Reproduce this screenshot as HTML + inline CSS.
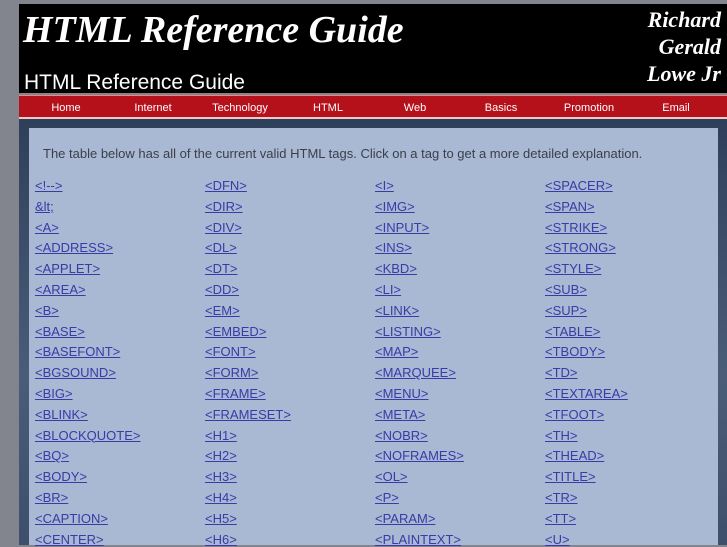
<!DOCTYPE html>
<html><head><meta charset="utf-8"><style>
body{margin:0;width:727px;height:545px;overflow:hidden;background:#82858d;font-family:"Liberation Sans",sans-serif;position:relative}
#hdr{position:absolute;left:19px;top:4px;width:708px;height:89px;background:#000}
.script{position:absolute;color:#fff;font-family:"Liberation Serif",serif;font-style:italic;font-weight:bold}
#nav{position:absolute;left:19px;top:95px;width:708px;height:24px;background:#b5111b;border-top:1px solid #e88;border-bottom:2px solid #f2c8c8;box-sizing:border-box}
#nav span{position:absolute;top:6px;color:#fff;font-size:11px;transform:translateX(-50%)}
#main{position:absolute;left:19px;top:119px;width:708px;height:426px;background:linear-gradient(#2e3f5a,#4a5d78 60%,#3d4f6b)}
#panel{position:absolute;left:29px;top:128px;width:689px;height:417px;background:#a9b8d3}
p{position:absolute;left:43px;top:146px;margin:0;font-size:13px;color:#3a3f4a}
a{position:absolute;font-size:13px;color:#3a3aa8;text-decoration:underline}
</style></head><body>
<div id="hdr">
<div class="script" style="left:4px;top:4px;font-size:38px">HTML Reference Guide</div>
<div style="position:absolute;left:5px;top:67px;color:#fff;font-size:21px">HTML Reference Guide</div>
<div class="script" style="right:6px;top:2px;font-size:22px;text-align:right;line-height:27px">Richard<br>Gerald<br>Lowe Jr</div>
</div>
<div id="nav">
<span style="left:47px">Home</span><span style="left:134px">Internet</span><span style="left:221px">Technology</span><span style="left:309px">HTML</span><span style="left:396px">Web</span><span style="left:482px">Basics</span><span style="left:570px">Promotion</span><span style="left:657px">Email</span>
</div>
<div id="main"></div>
<div id="panel"></div>
<p>The table below has all of the current valid HTML tags. Click on a tag to get a more detailed explanation.</p>
<div id="links"></div>
<script>
var c=[["<!-->","&lt;","<A>","<ADDRESS>","<APPLET>","<AREA>","<B>","<BASE>","<BASEFONT>","<BGSOUND>","<BIG>","<BLINK>","<BLOCKQUOTE>","<BQ>","<BODY>","<BR>","<CAPTION>","<CENTER>"],
["<DFN>","<DIR>","<DIV>","<DL>","<DT>","<DD>","<EM>","<EMBED>","<FONT>","<FORM>","<FRAME>","<FRAMESET>","<H1>","<H2>","<H3>","<H4>","<H5>","<H6>"],
["<I>","<IMG>","<INPUT>","<INS>","<KBD>","<LI>","<LINK>","<LISTING>","<MAP>","<MARQUEE>","<MENU>","<META>","<NOBR>","<NOFRAMES>","<OL>","<P>","<PARAM>","<PLAINTEXT>"],
["<SPACER>","<SPAN>","<STRIKE>","<STRONG>","<STYLE>","<SUB>","<SUP>","<TABLE>","<TBODY>","<TD>","<TEXTAREA>","<TFOOT>","<TH>","<THEAD>","<TITLE>","<TR>","<TT>","<U>"]];
var xs=[35,205,375,545],h="";
c.forEach(function(col,i){col.forEach(function(t,j){h+='<a style="left:'+xs[i]+'px;top:'+(178+j*20.8)+'px"></a>';});});
var d=document.getElementById("links");d.innerHTML=h;
var as=d.getElementsByTagName("a"),k=0;
c.forEach(function(col){col.forEach(function(t){as[k++].textContent=t;});});
</script>
</body></html>
